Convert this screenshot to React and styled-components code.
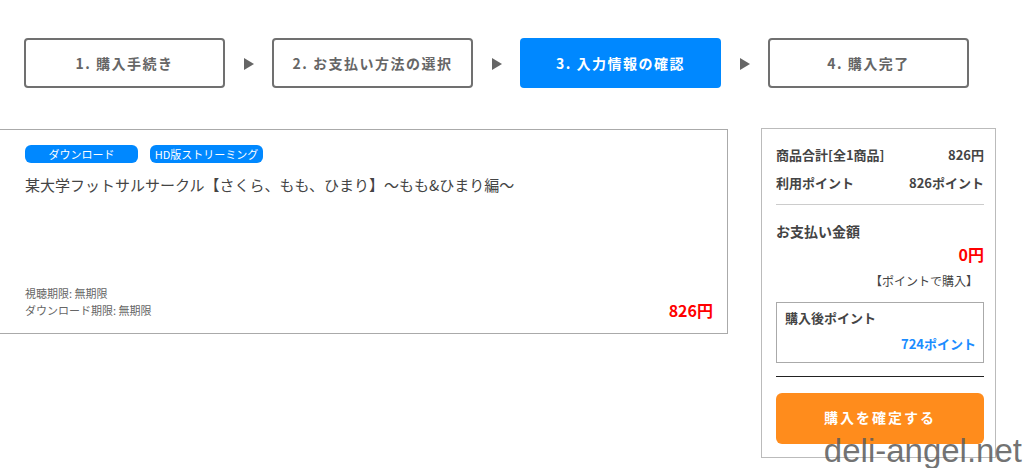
import React from "react";
import styled, { createGlobalStyle } from "styled-components";

const Global = createGlobalStyle`
  html, body { margin: 0; padding: 0; background: #fff; }
  body { font-family: "Noto Sans CJK JP", "Noto Sans", sans-serif; color: #333; overflow: hidden; }
`;

const Page = styled.div`
  position: relative;
  width: 1024px;
  height: 468px;
  overflow: hidden;
`;

const Steps = styled.div`
  display: flex;
  align-items: center;
  padding: 38px 0 0 24px;
  height: 50px;
`;

const Step = styled.div`
  box-sizing: border-box;
  width: 201px;
  height: 50px;
  display: flex;
  align-items: center;
  justify-content: center;
  border: ${(p) => (p.$active ? "none" : "2px solid #707070")};
  border-radius: 4px;
  background: ${(p) => (p.$active ? "#0088ff" : "#fff")};
  color: ${(p) => (p.$active ? "#fff" : "#666")};
  font-size: 14px;
  font-weight: 700;
  letter-spacing: 1.5px;
`;

const Arrow = styled.div`
  width: 47px;
  display: flex;
  justify-content: center;
  align-items: center;
  padding-top: 2px;
  &::before {
    content: "";
    border-left: 10px solid #666;
    border-top: 6px solid transparent;
    border-bottom: 6px solid transparent;
  }
`;

const Main = styled.div`
  display: flex;
  align-items: flex-start;
  margin-top: 40px;
`;

const Card = styled.div`
  box-sizing: border-box;
  margin-left: -1px;
  width: 729px;
  height: 205px;
  border: 1px solid #aaa;
  margin-top: 1px;
  padding: 15px 14px 14px 25px;
  display: flex;
  flex-direction: column;
`;

const Tags = styled.div`
  display: flex;
  gap: 12px;
`;

const Tag = styled.span`
  width: 113px;
  height: 18px;
  border-radius: 6px;
  background: #0088ff;
  color: #fff;
  font-size: 11px;
  display: flex;
  align-items: center;
  justify-content: center;
  line-height: 1;
`;

const Title = styled.div`
  margin-top: 12px;
  font-size: 15px;
  color: #444;
  line-height: 20px;
`;

const Footer = styled.div`
  margin-top: auto;
  display: flex;
  justify-content: space-between;
  align-items: flex-end;
`;

const Terms = styled.div`
  font-size: 11px;
  color: #666;
  line-height: 17px;
`;

const Price = styled.div`
  color: #f00;
  font-size: 16px;
  font-weight: 700;
  line-height: 18px;
`;

const Side = styled.div`
  box-sizing: border-box;
  margin-left: 33px;
  width: 235px;
  height: 330px;
  border: 1px solid #bbb;
  padding: 17px 11px 0 14px;
  display: flex;
  flex-direction: column;
`;

const Row = styled.div`
  display: flex;
  justify-content: space-between;
  font-size: 13px;
  font-weight: 700;
  color: #444;
  line-height: 18px;
  margin-bottom: ${(p) => p.$mb || 0}px;
`;

const Rule = styled.hr`
  border: none;
  border-top: 1px solid ${(p) => p.$color};
  margin: ${(p) => p.$m};
  width: 100%;
`;

const PayLabel = styled.div`
  font-size: 14px;
  font-weight: 700;
  color: #444;
  line-height: 20px;
  margin-top: 16px;
`;

const PayAmount = styled.div`
  text-align: right;
  color: #f00;
  font-size: 16px;
  font-weight: 700;
  line-height: 20px;
  margin-top: 3px;
`;

const PayNote = styled.div`
  text-align: right;
  font-size: 12px;
  color: #444;
  line-height: 18px;
  margin-top: 8px;
  padding-right: 6px;
`;

const AfterBox = styled.div`
  box-sizing: border-box;
  margin-top: 12px;
  height: 61px;
  border: 1px solid #aaa;
  padding: 6px 7px 0 8px;
`;

const AfterLabel = styled.div`
  font-size: 13px;
  font-weight: 700;
  color: #444;
  line-height: 18px;
`;

const AfterValue = styled.div`
  text-align: right;
  font-size: 13px;
  font-weight: 700;
  color: #1a8cff;
  line-height: 18px;
  margin-top: 8px;
`;

const Confirm = styled.button`
  height: 51px;
  border: none;
  border-radius: 6px;
  background: #ff8c1c;
  color: #fff;
  font-family: inherit;
  font-size: 14px;
  font-weight: 700;
  letter-spacing: 2px;
  padding: 0 0 4px;
`;

const Watermark = styled.div`
  position: absolute;
  right: 2px;
  bottom: -3px;
  font-family: "Liberation Sans", Arial, sans-serif;
  font-size: 33px;
  color: rgba(90, 90, 90, 0.85);
  line-height: 40px;
`;

export default function App() {
  return (
    <Page>
      <Global />
      <Steps>
        <Step>1. 購入手続き</Step>
        <Arrow />
        <Step>2. お支払い方法の選択</Step>
        <Arrow />
        <Step $active>3. 入力情報の確認</Step>
        <Arrow />
        <Step>4. 購入完了</Step>
      </Steps>
      <Main>
        <Card>
          <Tags>
            <Tag>ダウンロード</Tag>
            <Tag>HD版ストリーミング</Tag>
          </Tags>
          <Title>某大学フットサルサークル【さくら、もも、ひまり】～もも&amp;ひまり編～</Title>
          <Footer>
            <Terms>
              視聴期限: 無期限
              <br />
              ダウンロード期限: 無期限
            </Terms>
            <Price>826円</Price>
          </Footer>
        </Card>
        <Side>
          <Row $mb={10}>
            <span>商品合計[全1商品]</span>
            <span>826円</span>
          </Row>
          <Row>
            <span>利用ポイント</span>
            <span>826ポイント</span>
          </Row>
          <Rule $color="#ccc" $m="12px 0 0" />
          <PayLabel>お支払い金額</PayLabel>
          <PayAmount>0円</PayAmount>
          <PayNote>【ポイントで購入】</PayNote>
          <AfterBox>
            <AfterLabel>購入後ポイント</AfterLabel>
            <AfterValue>724ポイント</AfterValue>
          </AfterBox>
          <Rule $color="#222" $m="13px 0 16px" />
          <Confirm>購入を確定する</Confirm>
        </Side>
      </Main>
      <Watermark>deli-angel.net</Watermark>
    </Page>
  );
}
